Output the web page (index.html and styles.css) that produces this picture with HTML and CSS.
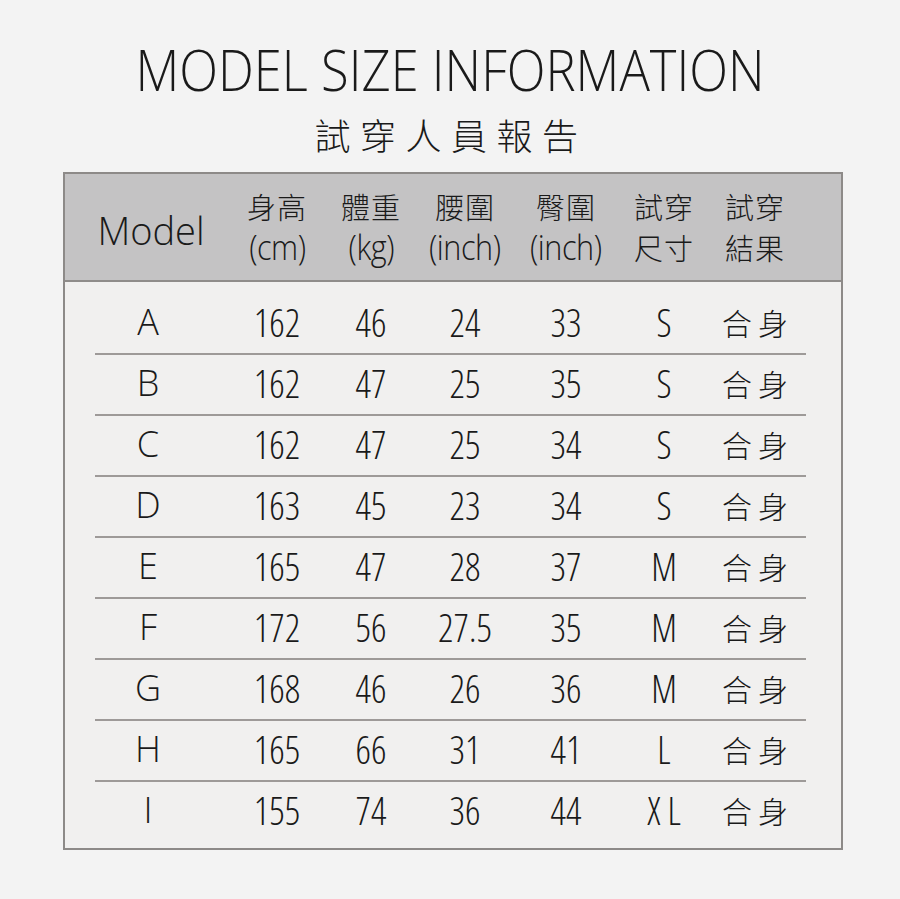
FILE: index.html
```html
<!DOCTYPE html>
<html lang="zh-Hant">
<head>
<meta charset="utf-8">
<title>Model Size Information</title>
<link rel="stylesheet" href="styles.css">
</head>
<body>
<main class="page">
  <h1 class="title">MODEL SIZE INFORMATION</h1>
  <p class="subtitle">試穿人員報告</p>
  <section class="size-table">
    <div class="head">
      <div class="hcell model-head">Model</div>
      <div class="hcell"><span class="cjk">身高</span><span class="unit">(cm)</span></div>
      <div class="hcell"><span class="cjk">體重</span><span class="unit">(kg)</span></div>
      <div class="hcell"><span class="cjk">腰圍</span><span class="unit">(inch)</span></div>
      <div class="hcell"><span class="cjk">臀圍</span><span class="unit">(inch)</span></div>
      <div class="hcell"><span class="cjk">試穿</span><span class="cjk">尺寸</span></div>
      <div class="hcell"><span class="cjk">試穿</span><span class="cjk">結果</span></div>
    </div>
    <div class="body">
      <div class="row"><span class="c first">A</span><span class="c">162</span><span class="c">46</span><span class="c">24</span><span class="c">33</span><span class="c">S</span><span class="c fit">合身</span></div>
      <div class="row"><span class="c first">B</span><span class="c">162</span><span class="c">47</span><span class="c">25</span><span class="c">35</span><span class="c">S</span><span class="c fit">合身</span></div>
      <div class="row"><span class="c first">C</span><span class="c">162</span><span class="c">47</span><span class="c">25</span><span class="c">34</span><span class="c">S</span><span class="c fit">合身</span></div>
      <div class="row"><span class="c first">D</span><span class="c">163</span><span class="c">45</span><span class="c">23</span><span class="c">34</span><span class="c">S</span><span class="c fit">合身</span></div>
      <div class="row"><span class="c first">E</span><span class="c">165</span><span class="c">47</span><span class="c">28</span><span class="c">37</span><span class="c">M</span><span class="c fit">合身</span></div>
      <div class="row"><span class="c first">F</span><span class="c">172</span><span class="c">56</span><span class="c">27.5</span><span class="c">35</span><span class="c">M</span><span class="c fit">合身</span></div>
      <div class="row"><span class="c first">G</span><span class="c">168</span><span class="c">46</span><span class="c">26</span><span class="c">36</span><span class="c">M</span><span class="c fit">合身</span></div>
      <div class="row"><span class="c first">H</span><span class="c">165</span><span class="c">66</span><span class="c">31</span><span class="c">41</span><span class="c">L</span><span class="c fit">合身</span></div>
      <div class="row"><span class="c first">I</span><span class="c">155</span><span class="c">74</span><span class="c">36</span><span class="c">44</span><span class="c xl">XL</span><span class="c fit">合身</span></div>
    </div>
  </section>
</main>
</body>
</html>
```
FILE: styles.css
```css
html, body {
  margin: 0;
  padding: 0;
  background: #f3f3f3;
}

body {
  width: 900px;
  height: 899px;
  overflow: hidden;
  font-family: "Open Sans", "Noto Sans CJK TC", sans-serif;
  font-weight: 300;
  color: #1a1a1a;
}

.page {
  padding-top: 40px;
}

.title {
  margin: 0;
  font-size: 57px;
  line-height: 58px;
  font-weight: 300;
  text-align: center;
  transform: scaleX(0.89);
}

.subtitle {
  margin: 14px 0 0;
  font-family: "Noto Sans CJK TC", sans-serif;
  font-weight: 300;
  font-size: 36px;
  line-height: 44px;
  letter-spacing: 9.5px;
  text-align: center;
  padding-left: 2px;
}

.size-table {
  box-sizing: border-box;
  width: 780px;
  margin: 16px 0 0 63px;
  border: 2px solid #8d8a88;
  background: #f1f0ef;
}

.head,
.row {
  display: grid;
  grid-template-columns: 126px 112px 76px 112px 90px 106px 76px;
}

.head {
  height: 106px;
  padding: 0 35px 0 30px;
  background: #c4c3c4;
  border-bottom: 2px solid #8f8c8a;
}

.hcell {
  display: flex;
  flex-direction: column;
  align-items: center;
  justify-content: center;
  padding-bottom: 1px;
  white-space: nowrap;
}

.hcell:first-child {
  padding-right: 14px;
}

.model-head {
  font-size: 38px;
  line-height: 40px;
  padding-top: 6px;
  padding-bottom: 0;
}

.cjk {
  font-family: "Noto Sans CJK TC", sans-serif;
  font-weight: 300;
  font-size: 29px;
  line-height: 41px;
  letter-spacing: 1px;
}

.unit {
  font-size: 34px;
  line-height: 41px;
  letter-spacing: -0.5px;
  transform: scaleX(0.9);
}

.body {
  padding: 12px 35px 7px 30px;
}

.row {
  height: 59px;
  border-bottom: 2px solid #9e9a98;
  align-items: center;
}

.row:last-child {
  border-bottom: none;
}

.c {
  display: flex;
  justify-content: center;
  font-size: 38px;
  line-height: 56px;
  padding-bottom: 3px;
  font-stretch: 80%;
  white-space: nowrap;
}

.c.first {
  padding-right: 20px;
  font-stretch: 100%;
  font-size: 36px;
}

.c.xl {
  letter-spacing: 7px;
  padding-left: 7px;
}

.c.fit {
  font-family: "Noto Sans CJK TC", sans-serif;
  font-weight: 300;
  font-size: 30px;
  letter-spacing: 6px;
  padding-left: 6px;
}
```
